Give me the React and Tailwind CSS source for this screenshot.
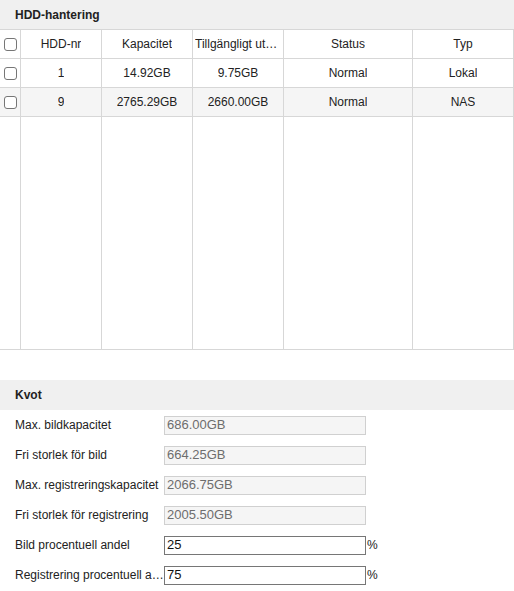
import React from 'react';

const cols = "grid grid-cols-[21px_81px_91px_91px_129px_101px]";

const disks = [
  { nr: '1', cap: '14.92GB', free: '9.75GB', status: 'Normal', type: 'Lokal' },
  { nr: '9', cap: '2765.29GB', free: '2660.00GB', status: 'Normal', type: 'NAS' },
];

const quota = [
  { label: 'Max. bildkapacitet', value: '686.00GB', readOnly: true },
  { label: 'Fri storlek för bild', value: '664.25GB', readOnly: true },
  { label: 'Max. registreringskapacitet', value: '2066.75GB', readOnly: true },
  { label: 'Fri storlek för registrering', value: '2005.50GB', readOnly: true },
  { label: 'Bild procentuell andel', value: '25', unit: '%' },
  { label: 'Registrering procentuell andel', value: '75', unit: '%' },
];

const Check = () => (
  <span className="block w-[13px] h-[13px] rounded-[3px] border border-[#767676] bg-white" />
);

const Cell = ({ children, className = '' }) => (
  <div className={"flex items-center justify-center border-r border-[#d7d7d7] px-[2px] overflow-hidden " + className}>
    <span className="truncate">{children}</span>
  </div>
);

export default function App() {
  return (
    <div className="w-[514px] h-[591px] bg-white text-[12px] text-[#222] font-['Liberation_Sans',Arial,sans-serif] overflow-hidden">
      <div className="h-[29px] bg-[#f0f0f0] flex items-center px-[15px] font-bold">HDD-hantering</div>

      <div className="border-t border-[#d7d7d7]">
        <div className={cols + " h-[29px] border-b border-[#d7d7d7]"}>
          <div className="flex items-center justify-center border-r border-[#d7d7d7]"><Check /></div>
          <Cell>HDD-nr</Cell>
          <Cell>Kapacitet</Cell>
          <Cell className="!justify-start">Tillgängligt utrymme</Cell>
          <Cell>Status</Cell>
          <Cell>Typ</Cell>
        </div>
        {disks.map((d, i) => (
          <div key={d.nr} className={cols + " h-[29px] border-b border-[#d7d7d7] " + (i === 1 ? "bg-[#f5f5f5]" : "bg-white")}>
            <div className="flex items-center justify-center border-r border-[#d7d7d7]"><Check /></div>
            <Cell>{d.nr}</Cell>
            <Cell>{d.cap}</Cell>
            <Cell>{d.free}</Cell>
            <Cell>{d.status}</Cell>
            <Cell>{d.type}</Cell>
          </div>
        ))}
        <div className={cols + " h-[233px] border-b border-[#d7d7d7]"}>
          <div className="border-r border-[#d7d7d7]" />
          <div className="border-r border-[#d7d7d7]" />
          <div className="border-r border-[#d7d7d7]" />
          <div className="border-r border-[#d7d7d7]" />
          <div className="border-r border-[#d7d7d7]" />
          <div className="border-r border-[#d7d7d7]" />
        </div>
      </div>

      <div className="mt-[30px] h-[30px] bg-[#f0f0f0] flex items-center px-[15px] font-bold">Kvot</div>

      <div className="flex flex-col">
        {quota.map((q) => (
          <div key={q.label} className="h-[30px] flex items-center pl-[15px]">
            <span className="w-[149px] truncate">{q.label}</span>
            <input
              readOnly
              value={q.value}
              className={
                "w-[202px] h-[19px] px-[2px] text-[13px] outline-none font-['Liberation_Sans',Arial,sans-serif] " +
                (q.readOnly
                  ? "border border-[#d0d0d0] bg-[#f5f5f5] text-[#6d6d6d]"
                  : "border border-[#767676] bg-white text-[#111]")
              }
            />
            {q.unit && <span className="ml-[1px]">{q.unit}</span>}
          </div>
        ))}
      </div>
    </div>
  );
}
